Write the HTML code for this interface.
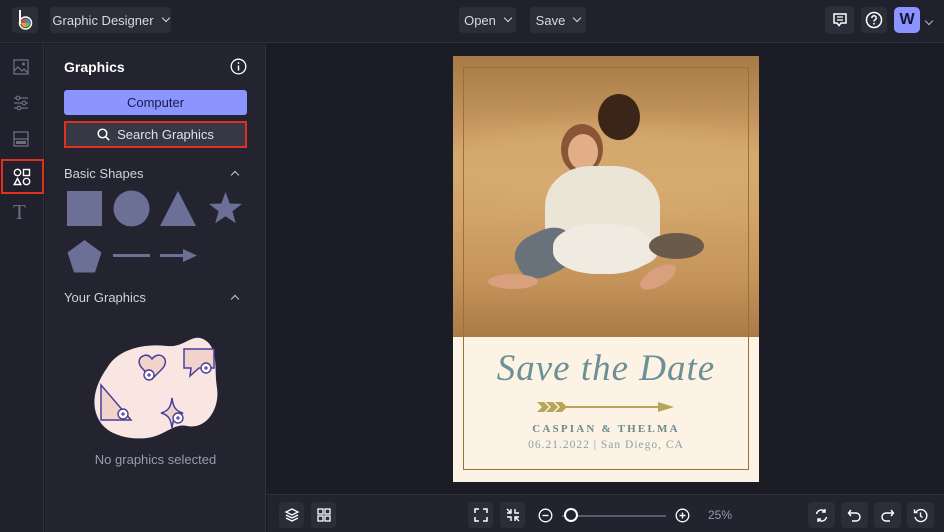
<!DOCTYPE html>
<html><head><meta charset="utf-8"><style>
*{box-sizing:border-box;margin:0;padding:0}
body{width:944px;height:532px;overflow:hidden;background:#1b1c26;font-family:"Liberation Sans",sans-serif;color:#d8d9e2;position:relative}
.abs{position:absolute}
.btn{position:absolute;background:#2b2d39;border-radius:4px;display:flex;align-items:center;justify-content:center;font-size:13px;color:#d8d9e2}
.chev{display:inline-block;width:6px;height:6px;border-right:1.5px solid #d8d9e2;border-bottom:1.5px solid #d8d9e2;transform:rotate(45deg);margin-left:9px;margin-top:-4px}
.up{display:inline-block;width:6px;height:6px;border-left:1.5px solid #ccc;border-top:1.5px solid #ccc;transform:rotate(45deg)}
svg{display:block}
</style></head><body>
<!-- top bar -->
<div class="abs" style="left:0;top:0;width:944px;height:43px;background:#20212c;border-bottom:1px solid #2e303c"></div>
<div class="btn" style="left:12px;top:7px;width:26px;height:26px;background:#2b2d39">
<svg width="20" height="22" viewBox="0 0 20 22"><path d="M5 1v14" stroke="#fff" stroke-width="2"/><circle cx="10.5" cy="14" r="6" fill="none" stroke="#fff" stroke-width="1.5"/><circle cx="10.5" cy="14" r="4.5" fill="#e8a030"/><path d="M10.5 14L10.5 9.5A4.5 4.5 0 0 1 15 14z" fill="#3b8fd0"/><path d="M10.5 14L15 14A4.5 4.5 0 0 1 10.5 18.5z" fill="#7cb342"/><path d="M10.5 14L6 14A4.5 4.5 0 0 1 10.5 9.5z" fill="#d84a4a"/></svg></div>
<div class="btn" style="left:50px;top:7px;width:121px;height:26px">Graphic Designer<span class="chev"></span></div>
<div class="btn" style="left:459px;top:7px;width:57px;height:26px">Open<span class="chev"></span></div>
<div class="btn" style="left:530px;top:7px;width:56px;height:26px">Save<span class="chev"></span></div>
<div class="btn" style="left:825px;top:6px;width:29px;height:28px"><svg width="16" height="16" viewBox="0 0 16 16"><path d="M2 2h12v9H9l-2 2.5L5 11H2z" fill="none" stroke="#fff" stroke-width="1.5"/><path d="M5 5h6M5 8h6" stroke="#fff" stroke-width="1.3"/></svg></div>
<div class="btn" style="left:861px;top:7px;width:26px;height:26px"><svg width="18" height="18" viewBox="0 0 18 18"><circle cx="9" cy="9" r="7.5" fill="none" stroke="#fff" stroke-width="1.5"/><path d="M6.8 7a2.2 2.2 0 1 1 3 2c-.7.3-.8.8-.8 1.5" fill="none" stroke="#fff" stroke-width="1.5"/><circle cx="9" cy="12.8" r=".9" fill="#fff"/></svg></div>
<div class="abs" style="left:894px;top:7px;width:26px;height:26px;background:#8c95ff;border-radius:5px;color:#141633;font-weight:bold;font-size:16px;text-align:center;line-height:26px">W</div>
<span class="chev abs" style="left:926px;top:18px;margin:0;border-color:#bbb"></span>

<!-- left rail -->
<div class="abs" style="left:0;top:44px;width:44px;height:488px;background:#20212c;border-right:1px solid #2e303c"></div>
<svg class="abs" style="left:13px;top:59px" width="16" height="16" viewBox="0 0 16 16"><rect x="1" y="1" width="14" height="14" fill="none" stroke="#6b6e82" stroke-width="1.3"/><circle cx="10.5" cy="5" r="1.5" fill="#6b6e82"/><path d="M1 12l4-4 4 4 2-2 4 4" fill="none" stroke="#6b6e82" stroke-width="1.3"/></svg>
<svg class="abs" style="left:13px;top:95px" width="16" height="16" viewBox="0 0 16 16"><path d="M1 3h14M1 8h14M1 13h14" stroke="#6b6e82" stroke-width="1.3"/><circle cx="5" cy="3" r="1.8" fill="#20212c" stroke="#6b6e82" stroke-width="1.2"/><circle cx="11" cy="8" r="1.8" fill="#20212c" stroke="#6b6e82" stroke-width="1.2"/><circle cx="6" cy="13" r="1.8" fill="#20212c" stroke="#6b6e82" stroke-width="1.2"/></svg>
<svg class="abs" style="left:13px;top:131px" width="16" height="16" viewBox="0 0 16 16"><rect x="1" y="1" width="14" height="14" fill="none" stroke="#6b6e82" stroke-width="1.3"/><path d="M1 8h14" stroke="#6b6e82" stroke-width="1.3"/><rect x="3" y="10" width="10" height="3" fill="#6b6e82"/></svg>
<div class="abs" style="left:1px;top:159px;width:43px;height:35px;border:2px solid #e0301e"></div>
<svg class="abs" style="left:13px;top:168px" width="18" height="18" viewBox="0 0 18 18"><circle cx="4.5" cy="4.5" r="3.2" fill="none" stroke="#fff" stroke-width="1.4"/><rect x="10.5" y="1.5" width="6" height="6" fill="none" stroke="#fff" stroke-width="1.4"/><path d="M4.5 10.5l3.3 6H1.2z" fill="none" stroke="#fff" stroke-width="1.4"/><circle cx="13.5" cy="13.5" r="3.2" fill="none" stroke="#fff" stroke-width="1.4"/></svg>
<div class="abs" style="left:13px;top:200px;font-family:'Liberation Serif',serif;font-size:21px;color:#6b6e82">T</div>

<!-- panel -->
<div class="abs" style="left:45px;top:44px;width:221px;height:488px;background:#23242f;border-right:1px solid #2e303c"></div>
<div class="abs" style="left:64px;top:59px;font-size:14px;font-weight:bold;color:#fff">Graphics</div>
<svg class="abs" style="left:230px;top:58px" width="17" height="17" viewBox="0 0 17 17"><circle cx="8.5" cy="8.5" r="7.3" fill="none" stroke="#fff" stroke-width="1.3"/><path d="M8.5 7.5v5" stroke="#fff" stroke-width="1.5"/><circle cx="8.5" cy="5" r=".9" fill="#fff"/></svg>
<div class="abs" style="left:64px;top:90px;width:183px;height:25px;background:#8c95ff;border-radius:3px;color:#1a1c4a;font-size:13px;text-align:center;line-height:25px">Computer</div>
<div class="abs" style="left:64px;top:121px;width:183px;height:27px;background:#363845;border:2px solid #e0301e;font-size:13px;color:#e0e0e8;text-align:center;line-height:23px"><svg style="display:inline-block;vertical-align:-2px;margin-right:7px" width="13" height="13" viewBox="0 0 13 13"><circle cx="5.5" cy="5.5" r="4.3" fill="none" stroke="#fff" stroke-width="1.5"/><path d="M8.7 8.7l3.5 3.5" stroke="#fff" stroke-width="1.5"/></svg>Search Graphics</div>
<div class="abs" style="left:64px;top:166px;font-size:13px;color:#d0d1da">Basic Shapes</div>
<span class="up abs" style="left:232px;top:172px"></span>
<svg class="abs" style="left:64px;top:189px" width="184" height="88" viewBox="0 0 184 88"><g fill="#6c6f96"><rect x="3" y="2" width="35" height="35"/><circle cx="67.5" cy="19.5" r="18"/><path d="M114 2l18 35H96z"/><path d="M161.5 3l4.3 11.5 12.2.4-9.6 7.5 3.4 11.8-10.3-6.9-10.3 6.9 3.4-11.8-9.6-7.5 12.2-.4z"/><path d="M20.5 51l17 12.5-6.5 20h-21l-6.5-20z"/><rect x="49" y="65" width="37" height="3"/><rect x="96" y="65" width="24" height="3"/><path d="M119 60l14 6.5-14 6.5z"/></g></svg>
<div class="abs" style="left:64px;top:290px;font-size:13px;color:#d0d1da">Your Graphics</div>
<span class="up abs" style="left:232px;top:296px"></span>
<svg class="abs" style="left:85px;top:330px" width="135" height="112" viewBox="0 0 135 112"><path d="M22 38c10-18 35-25 60-22 18 2 25-14 38-6 14 9 9 30 12 48 3 20-10 42-30 38-14-3-22 10-40 12-18 2-40-3-48-18-10-18-2-38 8-52z" fill="#f9e6e2"/>
<g fill="#f2d3cc" stroke="#4a3e9a" stroke-width="1.5"><path d="M57 38c-4-4-4-10 1-12 4-2 7 0 9 3 2-3 6-5 10-3 5 3 4 9 0 13l-10 10z"/><path d="M99 19h30v19h-15l-9 8 1-8h-7z"/><path d="M16 55l30 35H16z"/><path d="M87 68c1 8 3 13 11 15-8 2-10 7-11 15-1-8-3-13-11-15 8-2 10-7 11-15z"/></g>
<g fill="#fff" stroke="#4a3e9a" stroke-width="1.4"><circle cx="64" cy="45" r="5"/><circle cx="121" cy="38" r="5"/><circle cx="38" cy="84" r="5"/><circle cx="93" cy="88" r="5"/></g>
<g stroke="#4a3e9a" stroke-width="1.2"><path d="M62 45h4M64 43v4M119 38h4M121 36v4M36 84h4M38 82v4M91 88h4M93 86v4"/></g></svg>
<div class="abs" style="left:45px;top:452px;width:221px;text-align:center;font-size:13px;color:#9a9cac">No graphics selected</div>

<!-- card -->
<div class="abs" style="left:453px;top:56px;width:306px;height:282px;overflow:hidden;background:linear-gradient(180deg,#a77a45 0%,#c69860 25%,#d2a56a 55%,#c4935a 80%,#a87a45 100%)">
<div class="abs" style="left:-40px;top:70px;width:400px;height:80px;background:#dcb176;border-radius:50%;opacity:.6;filter:blur(10px)"></div>
<div class="abs" style="left:145px;top:38px;width:42px;height:46px;background:#3b2418;border-radius:50%"></div>
<div class="abs" style="left:108px;top:68px;width:42px;height:50px;background:#8a5534;border-radius:50%"></div>
<div class="abs" style="left:115px;top:78px;width:30px;height:36px;background:#e1ae88;border-radius:50%"></div>
<div class="abs" style="left:92px;top:110px;width:115px;height:100px;background:#ebe5d8;border-radius:40% 40% 20% 20%"></div>
<div class="abs" style="left:62px;top:175px;width:60px;height:44px;background:#69727a;border-radius:40%;transform:rotate(-25deg)"></div>
<div class="abs" style="left:100px;top:168px;width:100px;height:50px;background:#f0ebe0;border-radius:45%"></div>
<div class="abs" style="left:35px;top:218px;width:50px;height:15px;background:#d8a07c;border-radius:50%"></div>
<div class="abs" style="left:185px;top:212px;width:40px;height:18px;background:#d8a07c;border-radius:50%;transform:rotate(-30deg)"></div>
<div class="abs" style="left:196px;top:177px;width:55px;height:26px;background:#6a5a4a;border-radius:50%"></div>
</div>
<div class="abs" style="left:453px;top:337px;width:306px;height:145px;background:#fdf3e5"></div>
<div class="abs" style="left:463px;top:67px;width:286px;height:403px;border:1.5px solid #9b7132"></div>
<div class="abs" style="left:453px;top:347px;width:306px;text-align:center;font-family:'URW Chancery L','Z003',cursive;font-style:italic;font-size:37px;color:#6b9097;letter-spacing:1px">Save the Date</div>
<svg class="abs" style="left:536px;top:400px" width="140" height="14" viewBox="0 0 140 14"><g fill="#b8a55a"><path d="M1 2h7l5 5-5 5H1l5-5z"/><path d="M10 2h7l5 5-5 5h-7l5-5z"/><path d="M19 2h7l5 5-5 5h-7l5-5z"/><rect x="30" y="6" width="96" height="2"/><path d="M122 2l16 5-16 5z"/></g></svg>
<div class="abs" style="left:453px;top:423px;width:306px;text-align:center;font-family:'Liberation Serif',serif;font-weight:bold;font-size:11px;letter-spacing:2.2px;color:#6b8a92">CASPIAN &amp; THELMA</div>
<div class="abs" style="left:453px;top:439px;width:306px;text-align:center;font-family:'Liberation Serif',serif;font-size:11.5px;letter-spacing:1px;color:#8aa3a8">06.21.2022 | San Diego, CA</div>

<!-- bottom bar -->
<div class="abs" style="left:267px;top:494px;width:677px;height:38px;background:#22232e;border-top:1px solid #2e303c"></div>
<div class="btn" style="left:279px;top:502px;width:25px;height:26px"><svg width="16" height="16" viewBox="0 0 16 16" fill="none" stroke="#fff" stroke-width="1.3"><path d="M8 2l6 3-6 3-6-3z"/><path d="M2 8l6 3 6-3M2 11l6 3 6-3"/></svg></div>
<div class="btn" style="left:311px;top:502px;width:25px;height:26px"><svg width="14" height="14" viewBox="0 0 14 14" fill="none" stroke="#fff" stroke-width="1.3"><rect x="1" y="1" width="5" height="5"/><rect x="8" y="1" width="5" height="5"/><rect x="1" y="8" width="5" height="5"/><rect x="8" y="8" width="5" height="5"/></svg></div>
<div class="btn" style="left:468px;top:502px;width:25px;height:26px"><svg width="14" height="14" viewBox="0 0 14 14" fill="none" stroke="#fff" stroke-width="1.5"><path d="M1 5V1h4M9 1h4v4M13 9v4H9M5 13H1V9"/></svg></div>
<div class="btn" style="left:500px;top:502px;width:25px;height:26px"><svg width="14" height="14" viewBox="0 0 14 14" fill="none" stroke="#fff" stroke-width="1.4"><path d="M1 5h4V1M9 1v4h4M13 9H9v4M5 13V9H1M1 1l4 4M13 13L9 9"/></svg></div>
<svg class="abs" style="left:538px;top:508px" width="15" height="15" viewBox="0 0 15 15"><circle cx="7.5" cy="7.5" r="6.3" fill="none" stroke="#fff" stroke-width="1.3"/><path d="M4.5 7.5h6" stroke="#fff" stroke-width="1.4"/></svg>
<div class="abs" style="left:562px;top:515px;width:104px;height:1.5px;background:#5a5c6c"></div>
<div class="abs" style="left:564px;top:508px;width:14px;height:14px;border-radius:50%;border:2px solid #fff;background:#22232e"></div>
<svg class="abs" style="left:675px;top:508px" width="15" height="15" viewBox="0 0 15 15"><circle cx="7.5" cy="7.5" r="6.3" fill="none" stroke="#fff" stroke-width="1.3"/><path d="M4.5 7.5h6M7.5 4.5v6" stroke="#fff" stroke-width="1.4"/></svg>
<div class="abs" style="left:708px;top:508px;font-size:12px;color:#9a9cac">25%</div>
<div class="btn" style="left:808px;top:502px;width:27px;height:26px"><svg width="15" height="15" viewBox="0 0 15 15" fill="none" stroke="#fff" stroke-width="1.4"><path d="M2.5 6A5 5 0 0 1 11 3.5M12.5 9A5 5 0 0 1 4 11.5"/><path d="M11 1v3h-3M4 14v-3h3"/></svg></div>
<div class="btn" style="left:841px;top:502px;width:27px;height:26px"><svg width="15" height="15" viewBox="0 0 15 15" fill="none" stroke="#fff" stroke-width="1.4"><path d="M4 2L1.5 5 4 8"/><path d="M2 5h7a4 4 0 0 1 0 8H5"/></svg></div>
<div class="btn" style="left:874px;top:502px;width:27px;height:26px"><svg width="15" height="15" viewBox="0 0 15 15" fill="none" stroke="#fff" stroke-width="1.4"><path d="M11 2l2.5 3L11 8"/><path d="M13 5H6a4 4 0 0 0 0 8h4"/></svg></div>
<div class="btn" style="left:907px;top:502px;width:27px;height:26px"><svg width="15" height="15" viewBox="0 0 15 15" fill="none" stroke="#fff" stroke-width="1.4"><path d="M3 4a6 6 0 1 1-1 5"/><path d="M1.5 1.5v3h3M7.5 4.5v3.5l2 1.5"/></svg></div>
</body></html>
